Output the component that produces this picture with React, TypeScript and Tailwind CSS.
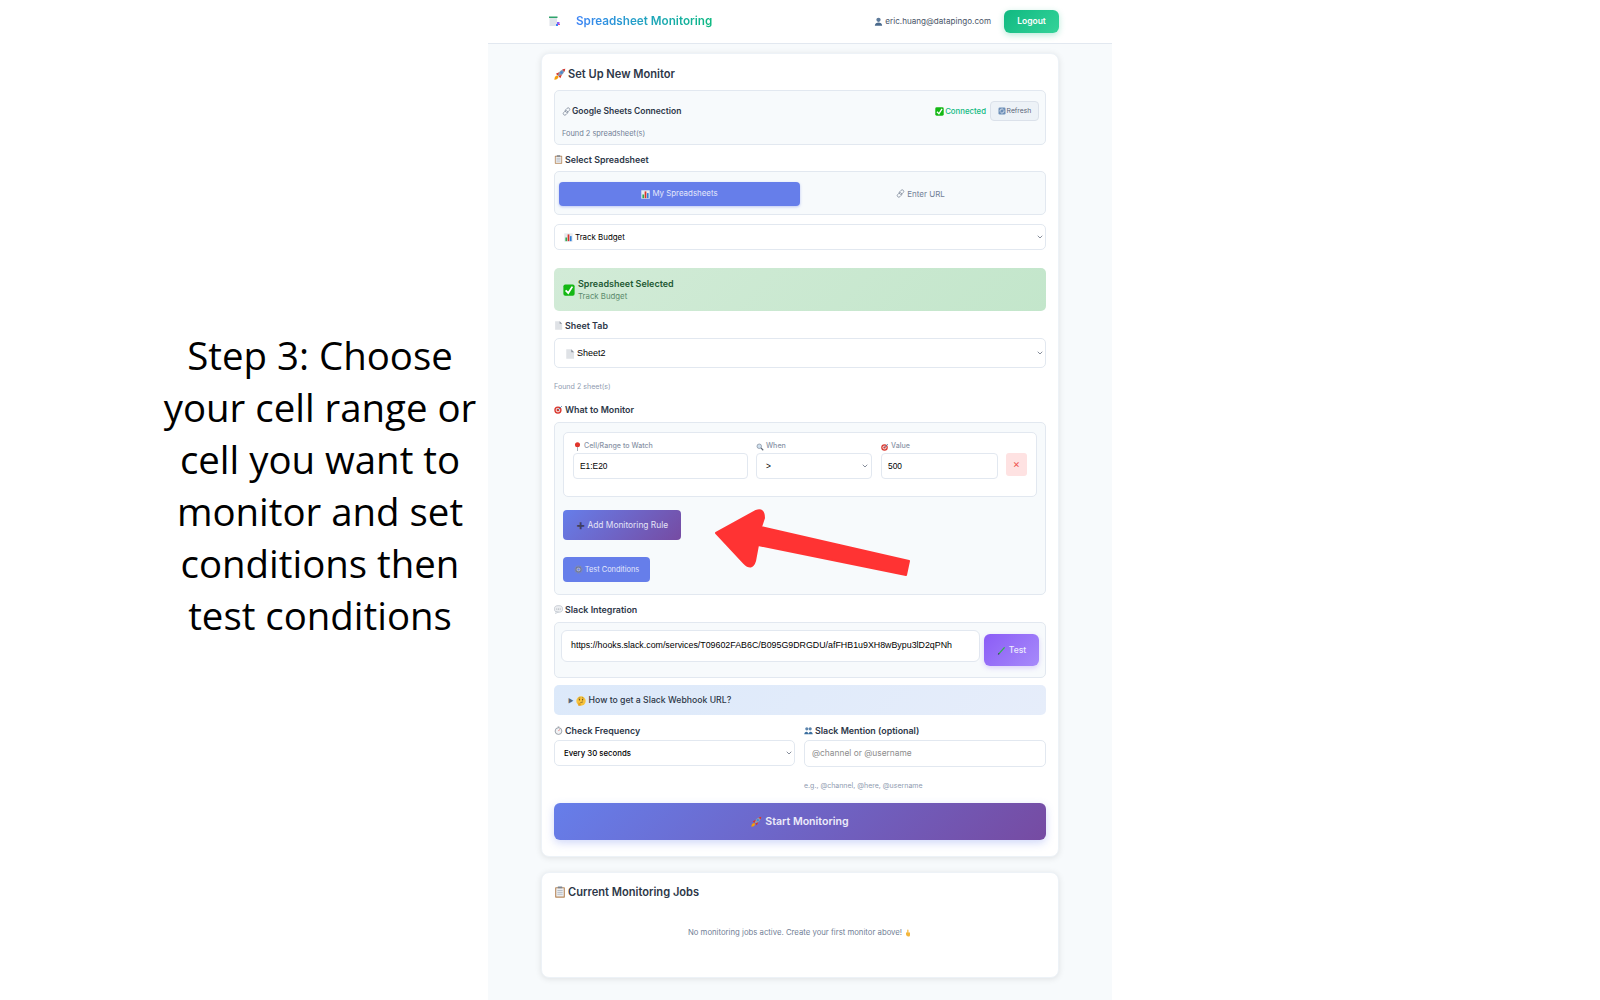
import React from 'react';
import { ChevronDown } from 'lucide-react';

type IconProps = { size?: number };

const Svg = ({ size = 10, children }: IconProps & { children: React.ReactNode }) => (
  <svg width={size} height={size} viewBox="0 0 16 16" className="inline-block shrink-0">
    {children}
  </svg>
);

const Rocket = (p: IconProps) => (
  <Svg {...p}>
    <path d="M5 11 C5 6 9 2 15 1 C14 7 10 11 5 11Z" fill="#8d99ae" />
    <path d="M11 2 L15 1 L14 5Z" fill="#d9342b" />
    <circle cx="10" cy="6" r="1.6" fill="#3f88d9" />
    <path d="M2.5 7.5 L7 5.5 L5 10Z M8.5 13.5 L10.5 9 L6 11Z" fill="#d9342b" />
    <path d="M0.5 15.5 C0.5 12 2.5 10 4.5 10 L6 11.5 C6 13.5 4 15.5 0.5 15.5Z" fill="#f59e0b" />
  </Svg>
);
const LinkIcon = (p: IconProps) => (
  <Svg {...p}>
    <g fill="none" stroke="#8a94a3" strokeWidth="1.5">
      <rect x="7" y="1" width="5.5" height="9" rx="2.7" transform="rotate(45 9.75 5.5)" />
      <rect x="3.5" y="6" width="5.5" height="9" rx="2.7" transform="rotate(45 6.25 10.5)" />
    </g>
  </Svg>
);
const CheckBox = (p: IconProps) => (
  <Svg {...p}>
    <rect x="0.5" y="0.5" width="15" height="15" rx="2.5" fill="#14b814" />
    <path d="M3.5 8.5 L7 12 L12.5 3.5" fill="none" stroke="#fff" strokeWidth="2.4" />
  </Svg>
);
const RefreshIcon = (p: IconProps) => (
  <Svg {...p}>
    <rect x="1" y="1" width="14" height="14" rx="2.5" fill="#6d8fb8" />
    <path d="M4 9 A4 4 0 0 1 11 5.5 M12 7 A4 4 0 0 1 5 10.5" fill="none" stroke="#fff" strokeWidth="1.4" />
  </Svg>
);
const Clipboard = (p: IconProps) => (
  <Svg {...p}>
    <rect x="1.5" y="1.5" width="13" height="14" rx="1" fill="#b98a5e" />
    <rect x="3" y="3" width="10" height="11" fill="#eceef1" />
    <path d="M4.5 6 H11.5 M4.5 8.5 H11.5 M4.5 11 H11.5" stroke="#a6adb8" strokeWidth="1" />
    <rect x="5" y="0.5" width="6" height="2.5" rx="0.5" fill="#7d8590" />
  </Svg>
);
const BarChart = (p: IconProps) => (
  <Svg {...p}>
    <rect x="0.5" y="0.5" width="15" height="15" fill="#e6eaef" />
    <rect x="2.5" y="8" width="3" height="6.5" fill="#2fa84f" />
    <rect x="6.5" y="2.5" width="3" height="12" fill="#d9342b" />
    <rect x="10.5" y="5.5" width="3" height="9" fill="#2f7fd9" />
  </Svg>
);
const PageIcon = (p: IconProps) => (
  <Svg {...p}>
    <path d="M2 0.5 H10 L14.5 5 V15.5 H2Z" fill="#dfe2e6" />
    <path d="M10 0.5 L14.5 5 H10Z" fill="#8f96a1" />
  </Svg>
);
const Target = (p: IconProps) => (
  <Svg {...p}>
    <circle cx="7" cy="9" r="6.5" fill="#d9342b" />
    <circle cx="7" cy="9" r="4.2" fill="#f3d6d3" />
    <circle cx="7" cy="9" r="2.2" fill="#d9342b" />
    <path d="M7 9 L14 2" stroke="#4a7fb0" strokeWidth="1.5" />
  </Svg>
);
const Pin = (p: IconProps) => (
  <Svg {...p}>
    <circle cx="8" cy="5" r="4.5" fill="#e0352b" />
    <path d="M8 9 V16" stroke="#9aa0a8" strokeWidth="1.5" />
  </Svg>
);
const Magnifier = (p: IconProps) => (
  <Svg {...p}>
    <circle cx="6.5" cy="6.5" r="4.5" fill="#cfe0ee" stroke="#8a94a3" strokeWidth="1.6" />
    <path d="M10 10 L14.5 14.5" stroke="#5f6875" strokeWidth="2.2" />
  </Svg>
);
const Gear = (p: IconProps) => (
  <Svg {...p}>
    <circle cx="8" cy="8" r="4.6" fill="#aeb4c6" stroke="#6f7690" strokeWidth="1.8" />
    <circle cx="8" cy="8" r="6.4" fill="none" stroke="#868da6" strokeWidth="2" strokeDasharray="2 1.6" />
    <circle cx="8" cy="8" r="1.8" fill="#667eea" />
  </Svg>
);
const Bubble = (p: IconProps) => (
  <Svg {...p}>
    <ellipse cx="8" cy="7" rx="7.4" ry="6" fill="#eceef1" stroke="#b0b6c0" strokeWidth="1" />
    <path d="M4 11.5 L2.5 15.5 L8 12.5Z" fill="#eceef1" stroke="#b0b6c0" strokeWidth="0.7" />
    <circle cx="5" cy="7" r="0.9" fill="#8f96a1" />
    <circle cx="8" cy="7" r="0.9" fill="#8f96a1" />
    <circle cx="11" cy="7" r="0.9" fill="#8f96a1" />
  </Svg>
);
const Pencil = (p: IconProps) => (
  <Svg {...p}>
    <path d="M3.5 13.5 L13.5 2.5" stroke="#2fb14f" strokeWidth="2.4" />
    <path d="M1.5 15.5 L2.8 12.3 L4.8 14.2Z" fill="#123d20" />
  </Svg>
);
const Thinking = (p: IconProps) => (
  <Svg {...p}>
    <circle cx="8" cy="8" r="7.5" fill="#f7c23c" />
    <circle cx="5.5" cy="6" r="1.1" fill="#5c4a1e" />
    <circle cx="10.5" cy="6" r="1.1" fill="#5c4a1e" />
    <path d="M4 3.5 L7 3 M9.5 2.5 L12 3.5" stroke="#5c4a1e" strokeWidth="0.8" />
    <path d="M7 10.5 L11 9.5" stroke="#5c4a1e" strokeWidth="1" />
    <path d="M3.5 15.5 L4 10.5 L8 12.5 L7 15.5Z" fill="#e39f20" />
  </Svg>
);
const Stopwatch = (p: IconProps) => (
  <Svg {...p}>
    <circle cx="8" cy="9" r="6" fill="#f2f3f5" stroke="#868d98" strokeWidth="1.4" />
    <path d="M8 9 L10 6" stroke="#d9342b" strokeWidth="1" />
    <rect x="6.5" y="1" width="3" height="1.6" fill="#868d98" />
  </Svg>
);
const Busts = (p: IconProps) => (
  <Svg {...p}>
    <circle cx="5" cy="5" r="2.8" fill="#5d85ad" />
    <circle cx="11" cy="5" r="2.8" fill="#5d85ad" />
    <path d="M0.5 14.5 C0.5 8.5 8 8.5 8 14.5Z M8 14.5 C8 8.5 15.5 8.5 15.5 14.5Z" fill="#3c6f9f" />
  </Svg>
);
const Bust = (p: IconProps) => (
  <Svg {...p}>
    <circle cx="8" cy="5" r="3.8" fill="#5d7a9a" />
    <path d="M1.5 15.5 C1.5 8 14.5 8 14.5 15.5Z" fill="#4a6a8c" />
  </Svg>
);
const Hand = (p: IconProps) => (
  <Svg {...p}>
    <rect x="6.5" y="1" width="2.4" height="8" rx="1.2" fill="#f3b63c" />
    <path d="M4 7 H12 V12 C12 14 11 15 8.5 15 C6 15 4 13 4 10Z" fill="#f3b63c" />
  </Svg>
);
const Logo = () => (
  <svg width="12" height="12" viewBox="0 0 12 12" className="shrink-0">
    <rect x="0" y="0.5" width="8.5" height="1.5" fill="#2fa36b" />
    <rect x="0.5" y="2" width="7.5" height="8" fill="#dfe4ea" />
    <rect x="8" y="6" width="2.5" height="2" fill="#8b5cf6" />
    <rect x="7" y="8" width="2" height="2" fill="#3b82f6" />
    <rect x="9" y="8" width="2" height="1" fill="#ec4899" />
  </svg>
);

const Label = ({ icon, text }: { icon: React.ReactNode; text: string }) => (
  <div className="flex h-3 items-center gap-[2px] pt-px text-[8.9px] font-semibold text-[#2d3748]">
    {icon}
    <span>{text}</span>
  </div>
);

const SelectBox = ({ className, children }: { className: string; children: React.ReactNode }) => (
  <div className={`flex items-center justify-between rounded-[5px] border-[1.5px] border-[#e2e8f0] bg-white text-black ${className}`}>
    <span className="flex items-center gap-[2px] pt-px">{children}</span>
    <ChevronDown size={8} strokeWidth={2} className="mr-[1px] text-[#4a5568]" />
  </div>
);

const FieldLabel = ({ icon, text }: { icon: React.ReactNode; text: string }) => (
  <div className="flex h-[10px] items-center gap-[2px] pt-px text-[7.1px] font-medium text-[#8a94a6]">
    {icon}
    <span>{text}</span>
  </div>
);

const inputClass =
  "flex h-[26px] items-center rounded-[4px] border-[1.5px] border-[#e2e8f0] bg-white px-[6px] font-['Liberation_Sans',sans-serif] text-[8.4px] text-black";

export default function App() {
  return (
    <div className="relative flex h-screen overflow-hidden bg-white font-['Inter',sans-serif]">
      <div className="flex w-[488px] shrink-0 items-center justify-center pb-[30px] pl-[152px]">
        <p className="w-[336px] text-center font-['Open_Sans',sans-serif] text-[38.4px] leading-[52px] text-black">
          Step 3: Choose your cell range or cell you want to monitor and set conditions then test conditions
        </p>
      </div>

      <div className="h-full w-[624px] shrink-0 bg-[#f7fafc]">
        <header className="flex h-[44px] items-center border-b border-[#e2e8f0] bg-white pr-[53px] pl-[61px]">
          <Logo />
          <span className="ml-[15px] bg-gradient-to-r from-[#3b82f6] to-[#10b981] bg-clip-text pt-px text-[11.7px] font-semibold text-transparent">
            Spreadsheet Monitoring
          </span>
          <span className="ml-auto flex items-center gap-[2px] text-[8.1px] text-[#4a5568]">
            <Bust size={9} />
            eric.huang@datapingo.com
          </span>
          <button className="ml-[13px] h-[23px] w-[55px] rounded-[6px] bg-[linear-gradient(135deg,#10b981,#34d399)] text-[8.5px] font-semibold text-white shadow-[0_2px_6px_rgba(16,185,129,0.3)]">
            Logout
          </button>
        </header>

        <main className="px-[53px] pt-[9px]">
          <section className="rounded-[8px] border border-[#edf2f7] bg-white px-[12px] pt-[11px] pb-[16px] shadow-[0_1px_6px_rgba(0,0,0,0.1)]">
            <h2 className="flex h-[18px] items-center gap-[2px] text-[11.1px] font-semibold text-[#2d3748]">
              <Rocket size={12} />
              Set Up New Monitor
            </h2>

            <div className="mt-[7px] h-[55px] rounded-[5px] border border-[#e2e8f0] bg-[#f7fafc] pr-[6px] pl-[7px]">
              <div className="mt-[10px] flex h-[20px] items-center">
                <span className="flex items-center gap-[1px] text-[8.5px] font-semibold text-[#2d3748]">
                  <LinkIcon size={9} />
                  Google Sheets Connection
                </span>
                <span className="ml-auto flex items-center gap-[1px] pt-px text-[7.8px] font-medium text-[#10b981]">
                  <CheckBox size={9} />
                  Connected
                </span>
                <button className="ml-[4px] flex h-[20px] w-[49px] items-center justify-center gap-[1px] rounded-[4px] border border-[#dbe1ea] bg-[#edf2f7] text-[6.8px] text-[#5a6678]">
                  <RefreshIcon size={8} />
                  Refresh
                </button>
              </div>
              <p className="mt-[7px] text-[7.4px] text-[#718096]">Found 2 spreadsheet(s)</p>
            </div>

            <div className="mt-[8px]">
              <Label icon={<Clipboard size={9} />} text="Select Spreadsheet" />
            </div>

            <div className="mt-[6px] flex h-[44px] items-center rounded-[5px] border border-[#e2e8f0] bg-[#f7fafc] px-[4px]">
              <button className="mt-[1px] flex h-[24px] w-[241px] items-center justify-center gap-[2px] rounded-[4px] bg-[#667eea] pt-px text-[7.9px] text-[#e4e8fb] shadow-[0_1px_3px_rgba(102,126,234,0.4)]">
                <BarChart size={9} />
                My Spreadsheets
              </button>
              <button className="mt-[1px] flex h-[24px] flex-1 items-center justify-center gap-[2px] text-[8px] text-[#718096]">
                <LinkIcon size={9} />
                Enter URL
              </button>
            </div>

            <SelectBox className="mt-[9px] h-[26px] pl-[9px] text-[7.9px]">
              <BarChart size={9} />
              <span className="pt-px">Track Budget</span>
            </SelectBox>

            <div className="mt-[18px] flex h-[43px] items-center gap-[3px] rounded-[5px] bg-[linear-gradient(135deg,#d2ebd7,#c3e6cb)] px-[9px]">
              <CheckBox size={12} />
              <div>
                <p className="text-[9px] leading-[12px] font-semibold text-[#1f5a34]">Spreadsheet Selected</p>
                <p className="pt-px text-[7.8px] leading-[11px] text-[#5b8a6c]">Track Budget</p>
              </div>
            </div>

            <div className="mt-[8px]">
              <Label icon={<PageIcon size={9} />} text="Sheet Tab" />
            </div>

            <SelectBox className="mt-[7px] h-[30px] pl-[10px] font-['Liberation_Sans',sans-serif] text-[9px]">
              <PageIcon size={10} />
              Sheet2
            </SelectBox>

            <p className="mt-[14px] h-[10px] text-[7.1px] leading-[10px] text-[#8f9bb0]">Found 2 sheet(s)</p>

            <div className="mt-[11px]">
              <Label icon={<Target size={9} />} text="What to Monitor" />
            </div>

            <div className="mt-[7px] h-[173px] rounded-[5px] border border-[#e2e8f0] bg-[#f7fafc] px-[8px] pt-[9px]">
              <div className="flex h-[65px] gap-[8px] rounded-[5px] border border-[#e2e8f0] bg-white pt-[8px] pl-[9px]">
                <div className="w-[175px]">
                  <FieldLabel icon={<Pin size={9} />} text="Cell/Range to Watch" />
                  <div className={`mt-[2px] ${inputClass}`}>E1:E20</div>
                </div>
                <div className="w-[116px]">
                  <FieldLabel icon={<Magnifier size={8} />} text="When" />
                  <div className={`mt-[2px] justify-between ${inputClass}`}>
                    <span className="ml-[3px]">&gt;</span>
                    <ChevronDown size={8} strokeWidth={2} className="-mr-[4px] text-[#4a5568]" />
                  </div>
                </div>
                <div className="ml-[1px] w-[117px]">
                  <FieldLabel icon={<Target size={8} />} text="Value" />
                  <div className={`mt-[2px] ${inputClass}`}>500</div>
                </div>
                <button className="mt-[12px] flex h-[23px] w-[21px] items-center justify-center rounded-[3px] bg-[#fee2e2] text-[11px] leading-none text-[#ef5350]">
                  ×
                </button>
              </div>

              <button className="mt-[13px] flex h-[30px] w-[118px] items-center justify-center gap-[2px] rounded-[4px] bg-[linear-gradient(135deg,#667eea,#764ba2)] text-[8.4px] text-[#e3e3f7]">
                <span className="text-[14px] leading-none font-bold text-[#3f3f60]">+</span>
                Add Monitoring Rule
              </button>

              <button className="mt-[17px] flex h-[25px] w-[87px] items-center justify-center gap-[2px] rounded-[4px] bg-[#667eea] text-[7.4px] text-[#e4e8fb]">
                <Gear size={9} />
                Test Conditions
              </button>
            </div>

            <div className="mt-[8px]">
              <Label icon={<Bubble size={9} />} text="Slack Integration" />
            </div>

            <div className="mt-[7px] flex h-[56px] items-start gap-[4px] rounded-[5px] border border-[#e2e8f0] bg-[#f7fafc] px-[6px]">
              <div className="mt-[7px] flex h-[32px] w-[419px] items-center overflow-hidden rounded-[6px] border border-[#e2e8f0] bg-white pl-[9px] font-['Liberation_Sans',sans-serif] text-[8.85px] whitespace-nowrap text-black">
                https://hooks.slack.com/services/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
              </div>
              <button className="mt-[11px] flex h-[32px] w-[55px] items-center justify-center gap-[3px] rounded-[6px] bg-[linear-gradient(135deg,#8b5cf6,#a78bfa)] text-[8.6px] font-medium text-[#ecebfd] shadow-[0_2px_5px_rgba(139,92,246,0.25)]">
                <Pencil size={9} />
                Test
              </button>
            </div>

            <div className="mt-[7px] flex h-[30px] items-center gap-[2px] rounded-[5px] bg-[linear-gradient(135deg,#dce9fa,#e6edfa)] pt-px pl-[14px] text-[8.7px] font-medium text-[#2d3748]">
              <span className="text-[6px] text-[#5a6678]">▶</span>
              <Thinking size={10} />
              <span className="ml-[1px]">How to get a Slack Webhook URL?</span>
            </div>

            <div className="mt-[9px] grid grid-cols-[241px_242px] gap-x-[9px]">
              <div>
                <Label icon={<Stopwatch size={9} />} text="Check Frequency" />
                <SelectBox className="mt-[4px] h-[26px] pl-[9px] text-[7.8px] font-medium">Every 30 seconds</SelectBox>
              </div>
              <div>
                <Label icon={<Busts size={9} />} text="Slack Mention (optional)" />
                <div className="mt-[4px] flex h-[27px] items-center rounded-[5px] border-[1.5px] border-[#e2e8f0] bg-white pl-[7px] text-[8.4px] text-[#8d8d8d]">
                  @channel or @username
                </div>
                <p className="mt-[14px] h-[10px] text-[7px] leading-[10px] text-[#8f9bb0]">e.g., @channel, @here, @username</p>
              </div>
            </div>

            <button className="mt-[12px] flex h-[37px] w-full items-center justify-center gap-[3px] rounded-[6px] bg-[linear-gradient(135deg,#667eea,#764ba2)] text-[10.6px] font-semibold text-[#ecebfa] shadow-[0_3px_8px_rgba(102,126,234,0.3)]">
              <Rocket size={11} />
              Start Monitoring
            </button>
          </section>

          <section className="mt-[15px] h-[106px] rounded-[8px] border border-[#edf2f7] bg-white px-[12px] pt-[10px] shadow-[0_1px_6px_rgba(0,0,0,0.1)]">
            <h2 className="flex h-[18px] items-center gap-[2px] text-[11.1px] font-semibold text-[#2d3748]">
              <Clipboard size={12} />
              Current Monitoring Jobs
            </h2>
            <p className="mt-[26px] flex items-center justify-center gap-[2px] text-[7.75px] text-[#718096]">
              No monitoring jobs active. Create your first monitor above!
              <Hand size={8} />
            </p>
          </section>
        </main>
      </div>

      {/* red annotation arrow, sits over the form */}
      <svg className="pointer-events-none absolute top-[505px] left-[711px]" width="206" height="75" viewBox="0 0 206 75">
        <path
          d="M5 28 L45 6 Q53 3 53 13 L50 22 L198 56 L195 70 L47 40 L44 56 Q41 66 33 58 Z"
          fill="#ff3333"
          stroke="#ff3333"
          strokeWidth="2"
          strokeLinejoin="round"
        />
      </svg>
    </div>
  );
}
